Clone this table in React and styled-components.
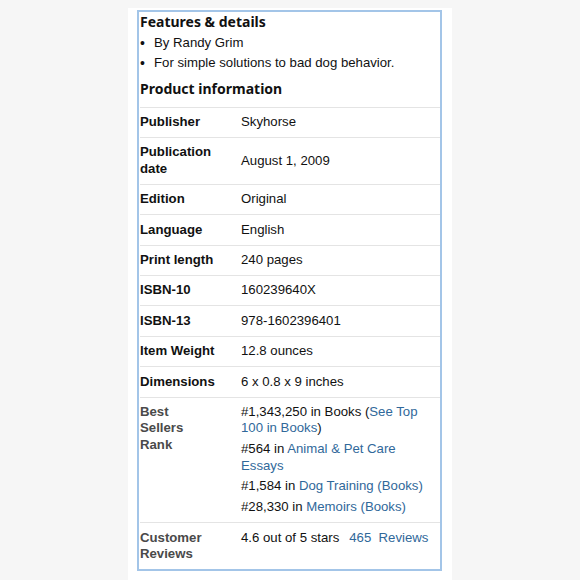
import React from "react";
import styled, { createGlobalStyle } from "styled-components";

const GlobalStyle = createGlobalStyle`
  html, body {
    margin: 0;
    padding: 0;
    background: #f6f6f6;
  }
`;

const Page = styled.div`
  display: flex;
  justify-content: center;
  padding-top: 8px;
  min-height: 572px;
`;

const Card = styled.div`
  width: 324px;
  box-sizing: border-box;
  background: #fff;
  padding: 2px 10px 6px 9px;
`;

const Box = styled.div`
  border: 2px solid #a3c5e8;
  padding: 0 0 0 1px;
  color: #111;
  font-family: "Liberation Sans", Arial, sans-serif;
  font-size: 13.2px;
`;

const Heading = styled.h2`
  margin: ${(p) => (p.$first ? "1px 0 0" : "7px 0 0")};
  font-family: "Noto Sans", "Open Sans", sans-serif;
  font-size: 14px;
  line-height: 18px;
  font-weight: 700;
  color: #111;
`;

const BulletList = styled.ul`
  list-style: none;
  margin: 2px 0 0;
  padding: 0;
`;

const BulletItem = styled.li`
  display: flex;
  line-height: 20px;
`;

const Dot = styled.span`
  width: 14px;
  flex: none;
  font-size: 14px;
`;

const Table = styled.div`
  margin-top: 8.5px;
`;

const Row = styled.div`
  display: grid;
  grid-template-columns: 101px 1fr;
  align-items: ${(p) => (p.$top ? "start" : "center")};
  border-top: 1px solid #e4e4e4;
  padding: 6.5px 0;
  line-height: 16.4px;
`;

const Label = styled.div`
  font-weight: 700;
  padding-right: 8px;
  color: ${(p) => (p.$muted ? "#4a4a4a" : "#111")};
  width: ${(p) => (p.$stacked ? "min-content" : "auto")};
`;

const Value = styled.div`
  padding-right: 4px;
  color: #111;
`;

const RankList = styled.ul`
  list-style: none;
  margin: 0;
  padding: 0;
`;

const RankItem = styled.li`
  & + & {
    margin-top: 4.4px;
  }
`;

const LinkText = styled.a`
  color: #30689a;
  text-decoration: none;
  margin-left: ${(p) => (p.$gap ? "10px" : "0")};
`;

const details = [
  ["Publisher", "Skyhorse"],
  ["Publication date", "August 1, 2009"],
  ["Edition", "Original"],
  ["Language", "English"],
  ["Print length", "240 pages"],
  ["ISBN-10", "160239640X"],
  ["ISBN-13", "978-1602396401"],
  ["Item Weight", "12.8 ounces"],
  ["Dimensions", "6 x 0.8 x 9 inches"],
];

const ranks = [
  ["#1,343,250 in Books (", "See Top 100 in Books", ")"],
  ["#564 in ", "Animal & Pet Care Essays", ""],
  ["#1,584 in ", "Dog Training (Books)", ""],
  ["#28,330 in ", "Memoirs (Books)", ""],
];

export default function App() {
  return (
    <>
      <GlobalStyle />
      <Page>
        <Card>
          <Box>
            <Heading $first>Features &amp; details</Heading>
            <BulletList>
              <BulletItem>
                <Dot>•</Dot>By Randy Grim
              </BulletItem>
              <BulletItem>
                <Dot>•</Dot>For simple solutions to bad dog behavior.
              </BulletItem>
            </BulletList>
            <Heading>Product information</Heading>
            <Table>
              {details.map(([label, value]) => (
                <Row key={label}>
                  <Label>{label}</Label>
                  <Value>{value}</Value>
                </Row>
              ))}
              <Row $top>
                <Label $muted $stacked>
                  Best Sellers Rank
                </Label>
                <Value>
                  <RankList>
                    {ranks.map(([before, link, after]) => (
                      <RankItem key={link}>
                        {before}
                        <LinkText href="#">{link}</LinkText>
                        {after}
                      </RankItem>
                    ))}
                  </RankList>
                </Value>
              </Row>
              <Row $top>
                <Label $muted $stacked>
                  Customer Reviews
                </Label>
                <Value>
                  4.6 out of 5 stars
                  <LinkText href="#" $gap>
                    465{"\u00a0"} Reviews
                  </LinkText>
                </Value>
              </Row>
            </Table>
          </Box>
        </Card>
      </Page>
    </>
  );
}
